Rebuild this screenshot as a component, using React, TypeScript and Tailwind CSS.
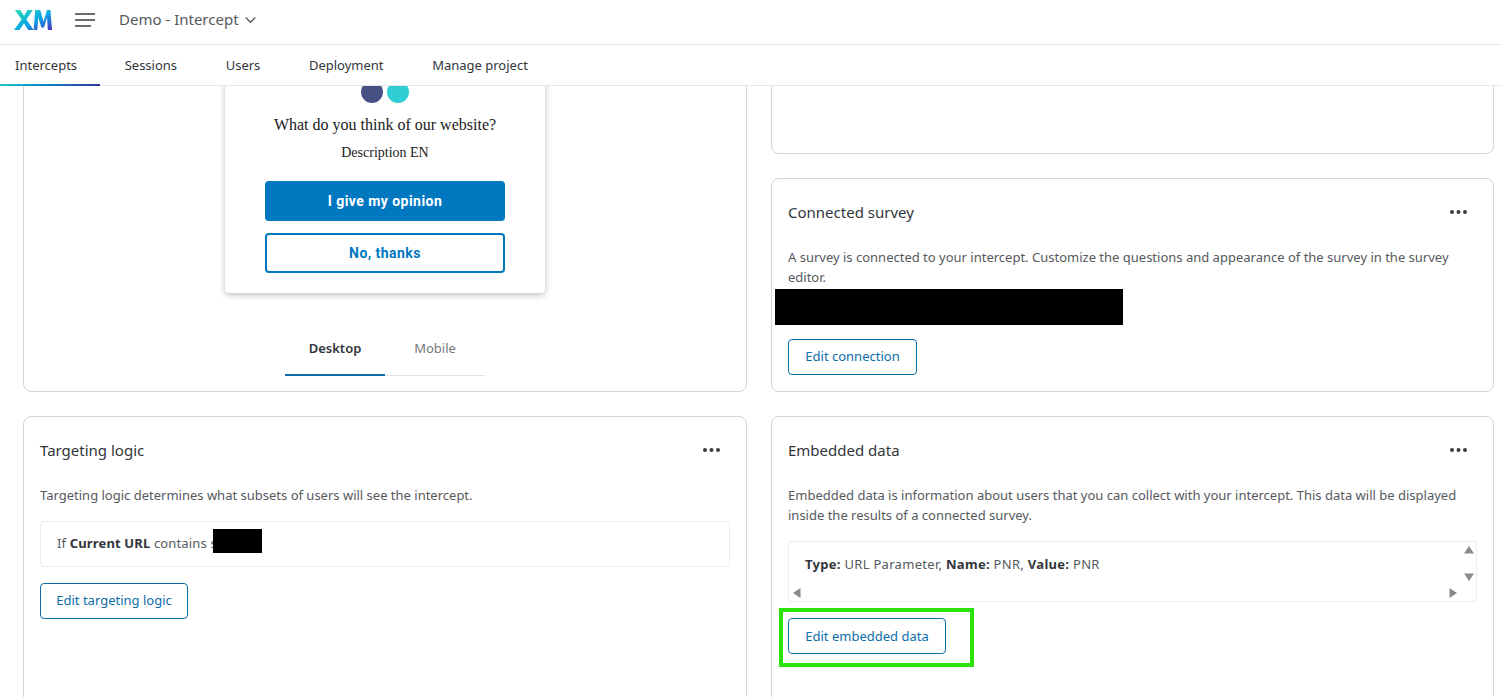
const sans = "font-['Noto_Sans',sans-serif]";

function Dots() {
  return (
    <svg width="20" height="6" viewBox="0 0 20 6" fill="#3c3c3c">
      <circle cx="3" cy="3" r="2" />
      <circle cx="9.5" cy="3" r="2" />
      <circle cx="16" cy="3" r="2" />
    </svg>
  );
}

function CardHead({ title }: { title: string }) {
  return (
    <div className="flex items-center justify-between h-[24px] pr-[8px]">
      <h2 className="text-[15px] leading-[24px] text-[#32363a]">{title}</h2>
      <Dots />
    </div>
  );
}

function EditButton({ label, className }: { label: string; className: string }) {
  return (
    <button className={`h-[36px] border border-[#0b6ea8] rounded-[4px] bg-white text-[13px] text-[#0b6ea8] whitespace-nowrap ${className}`}>
      {label}
    </button>
  );
}

function Logo() {
  return (
    <svg width="38" height="22" viewBox="0 0 38 22">
      <defs>
        <linearGradient id="xm" x1="0" y1="0" x2="1" y2="1">
          <stop offset="0" stopColor="#2be0b0" />
          <stop offset="0.55" stopColor="#0ba6e6" />
          <stop offset="1" stopColor="#4a2bc0" />
        </linearGradient>
      </defs>
      <path
        fill="url(#xm)"
        d="M0 21 7.6 10.6 .8 1h5.4l3.8 5.8L13.6 1h5.2l-6.4 9.4L19.6 21h-5.4L10 14.6 5.4 21zM19.6 21 21.2 1h5l3.4 11.6L33 1h3.4L38 21h-4.2l-.8-12.4-3 10h-2.6l-3.2-10-.8 12.4z"
      />
    </svg>
  );
}

function Arrow({ d }: { d: string }) {
  return (
    <svg width="10" height="10" viewBox="0 0 10 10" fill="#8a8a8a">
      <path d={d} />
    </svg>
  );
}

const tabs = ["Intercepts", "Sessions", "Users", "Deployment", "Manage project"];

export default function App() {
  return (
    <div className={`h-[697px] w-[1502px] overflow-hidden bg-white flex flex-col ${sans}`}>
      <header className="h-[45px] shrink-0 border-b border-[#e8e8e8] flex items-center pl-[14px] pb-[4px]">
        <Logo />
        <svg className="ml-[23px]" width="20" height="14" viewBox="0 0 20 14" stroke="#3c3c3c" strokeWidth="1.7">
          <path d="M0 1h20M0 7h20M0 13h16" />
        </svg>
        <span className="ml-[24px] -mt-px text-[15px] text-[#55595e]">Demo - Intercept</span>
        <svg className="ml-[6px]" width="11" height="8" viewBox="0 0 11 8" fill="none" stroke="#55595e" strokeWidth="1.3">
          <path d="M.7 1.5 5.5 6.3 10.3 1.5" />
        </svg>
      </header>

      <nav className="h-[41px] shrink-0 border-b border-[#e8e8e8] flex">
        {tabs.map((t, i) => (
          <div key={t} className="relative px-[24.3px] first:pl-[15px] first:pr-[23.3px] h-[40px] pt-[1px] flex items-center text-[13px] text-[#32363a]">
            {t}
            {i === 0 && (
              <div className="absolute left-0 right-0 bottom-[-1px] h-[2px] bg-gradient-to-r from-[#21c5d0] via-[#0b7cc0] to-[#2c2f9c]" />
            )}
          </div>
        ))}
      </nav>

      <main className="flex-1 overflow-hidden pl-[23px] pr-[8px]">
        <div className="-mt-[100px] grid grid-cols-[724px_723px] gap-x-[24px] gap-y-[24px]">
          {/* preview card */}
          <section className="h-[406px] border border-[#d5d5d5] rounded-[8px] flex flex-col items-center">
            <div className="w-[320px] h-[306px] shrink-0 bg-white rounded-[4px] shadow-[0_2px_6px_rgba(0,0,0,0.25)] flex flex-col items-center justify-end pb-[20px]">
              <div className="flex gap-[4px]">
                <div className="w-[22px] h-[22px] rounded-full bg-[#474f83]" />
                <div className="w-[22px] h-[22px] rounded-full bg-[#2fcdd4]" />
              </div>
              <p className="mt-[12px] font-['Liberation_Serif',serif] text-[16px] leading-[20px] text-[#1a1a1a]">What do you think of our website?</p>
              <p className="mt-[8px] font-['Liberation_Serif',serif] text-[14px] leading-[20px] text-[#1a1a1a]">Description EN</p>
              <button className="mt-[18px] w-[240px] h-[40px] rounded-[4px] bg-[#0078bf] text-white text-[14px] font-bold font-['Roboto',sans-serif] tracking-[0.45px]">I give my opinion</button>
              <button className="mt-[12px] w-[240px] h-[40px] rounded-[4px] border-2 border-[#0078bf] text-[#0078bf] text-[14px] font-bold font-['Roboto',sans-serif] tracking-[0.45px]">No, thanks</button>
            </div>
            <div className="mt-[32px] w-[200px] flex text-[13px] border-b border-[#e0e0e0]">
              <div className="w-[100px] h-[51px] -mb-px pt-[14px] text-center font-semibold text-[#32363a] border-b-2 border-[#0b6ea8]">Desktop</div>
              <div className="w-[100px] h-[50px] pt-[14px] text-center text-[#74777b]">Mobile</div>
            </div>
          </section>

          {/* right column top */}
          <div className="flex flex-col gap-[24px]">
            <section className="h-[168px] border border-[#d5d5d5] rounded-[8px]" />
            <section className="flex-1 border border-[#d5d5d5] rounded-[8px] px-[16px] pt-[21px]">
              <CardHead title="Connected survey" />
              <p className="mt-[23px] text-[13px] leading-[20px] text-[#55595e]">
                A survey is connected to your intercept. Customize the questions and appearance of the survey in the survey editor.
              </p>
              <div className="-ml-[13px] mt-[2px] w-[348px] h-[36px] bg-black" />
              <div className="mt-[14px]"><EditButton label="Edit connection" className="w-[129px]" /></div>
            </section>
          </div>

          {/* targeting logic */}
          <section className="h-[300px] border border-[#d5d5d5] rounded-[8px] px-[16px] pt-[21px]">
            <CardHead title="Targeting logic" />
            <p className="mt-[23px] text-[13px] leading-[20px] text-[#55595e]">
              Targeting logic determines what subsets of users will see the intercept.
            </p>
            <div className="mt-[16px] h-[46px] border border-[#ececec] rounded-[4px] pl-[16px] flex items-center text-[13px] text-[#55595e]">
              <span className="whitespace-pre tracking-[0.15px]">If <b className="font-bold text-[#32363a]">Current URL</b> contains s</span>
              <div className="-ml-[4px] -mt-[6px] w-[49px] h-[24px] bg-black" />
            </div>
            <div className="mt-[16px]"><EditButton label="Edit targeting logic" className="w-[148px]" /></div>
          </section>

          {/* embedded data */}
          <section className="h-[300px] border border-[#d5d5d5] rounded-[8px] px-[16px] pt-[21px]">
            <CardHead title="Embedded data" />
            <p className="mt-[23px] text-[13px] leading-[20px] text-[#55595e]">
              Embedded data is information about users that you can collect with your intercept. This data will be displayed inside the results of a connected survey.
            </p>
            <div className="relative mt-[16px] h-[61px] border border-[#ececec] rounded-[2px] pl-[16px] pt-[12px] text-[13px] leading-[20px] text-[#55595e] tracking-[0.3px]">
              <b className="font-bold text-[#32363a]">Type:</b> URL Parameter, <b className="font-bold text-[#32363a]">Name:</b> PNR, <b className="font-bold text-[#32363a]">Value:</b> PNR
              <div className="absolute right-[2px] top-[3px]"><Arrow d="M5 1 10 8.5H0z" /></div>
              <div className="absolute right-[2px] top-[30px]"><Arrow d="M5 9 0 1.5h10z" /></div>
              <div className="absolute left-[3px] top-[46px]"><Arrow d="M1 5 8.5 0v10z" /></div>
              <div className="absolute right-[18px] top-[46px]"><Arrow d="M9 5 1.5 10V0z" /></div>
            </div>
            <div className="mt-[6px] -ml-[9px] w-fit border-[4px] border-[#2be20a] pl-[5px] pr-[24px] pt-[6px] pb-[9px] leading-[0]">
              <EditButton label="Edit embedded data" className="w-[158px]" />
            </div>
          </section>
        </div>
      </main>
    </div>
  );
}
